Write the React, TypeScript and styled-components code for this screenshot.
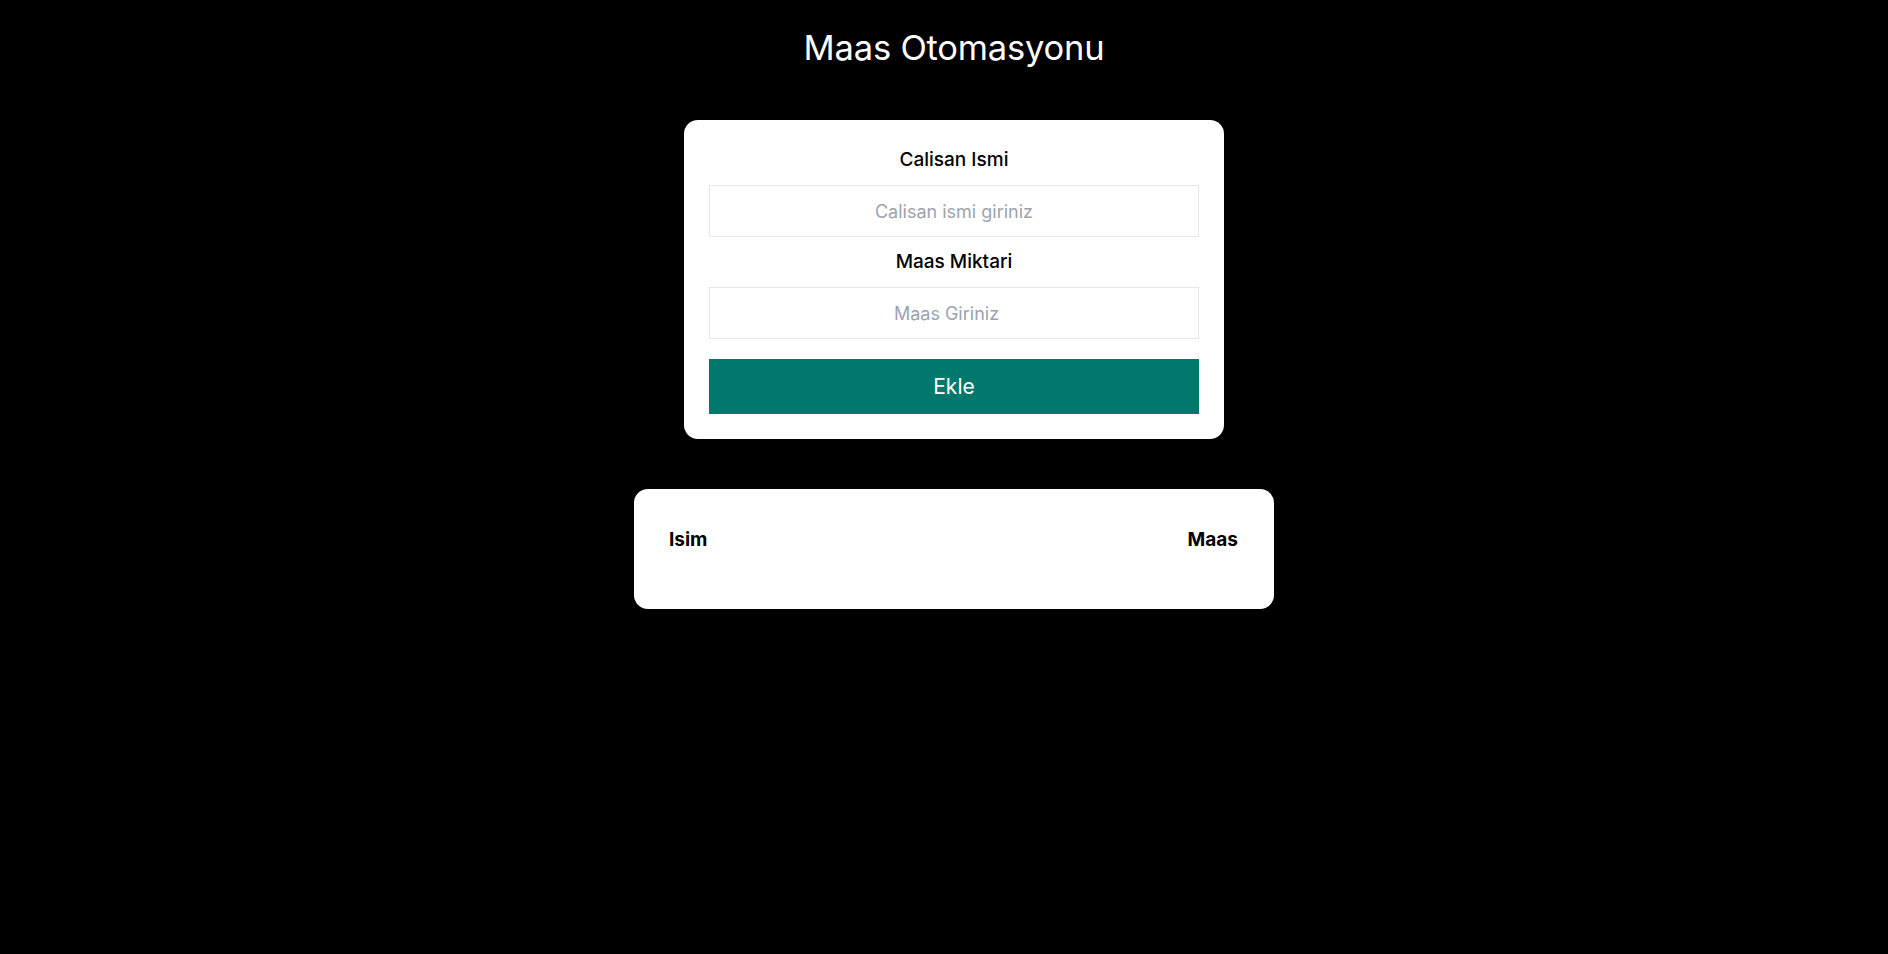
import React, { useState } from "react";
import styled, { createGlobalStyle } from "styled-components";

const GlobalStyle = createGlobalStyle`
  html, body {
    margin: 0;
    padding: 0;
    background: #000;
  }
  body {
    font-family: Inter, "Noto Sans", "Liberation Sans", sans-serif;
  }
  * { box-sizing: border-box; }
`;

const Page = styled.div`
  min-height: 100vh;
  background: #000;
  display: flex;
  flex-direction: column;
  align-items: center;
  padding-left: 20px;
`;

const Title = styled.h1`
  margin: 26px 0 50px;
  color: #fff;
  font-size: 34.5px;
  line-height: 44px;
  font-weight: 400;
  letter-spacing: -0.2px;
`;

const FormCard = styled.form`
  width: 540px;
  background: #fff;
  border-radius: 14px;
  padding: 28px 25px 25px;
  display: flex;
  flex-direction: column;
`;

const Label = styled.label`
  display: block;
  text-align: center;
  color: #000;
  font-size: 19px;
  line-height: 24px;
  font-weight: 500;
  margin-bottom: 13px;
`;

const Input = styled.input<{ $spinner?: boolean }>`
  width: 100%;
  height: 52px;
  border: 1px solid #e5e7eb;
  border-radius: 0;
  text-align: center;
  font-family: inherit;
  font-size: 18px;
  color: #111;
  outline: none;
  margin-bottom: 13px;
  padding: 0 ${(p) => (p.$spinner ? "17px" : "2px")} 0 2px;
  &::placeholder {
    color: #9ca3af;
  }
`;

const SubmitButton = styled.button`
  margin-top: 7px;
  width: 100%;
  height: 55px;
  border: none;
  background: #00786d;
  color: #fff;
  font-family: inherit;
  font-size: 21px;
  cursor: pointer;
`;

const TableCard = styled.div`
  margin-top: 50px;
  width: 640px;
  background: #fff;
  border-radius: 14px;
  padding: 39px 36px 57px 35px;
`;

const Table = styled.table`
  width: 100%;
  border-collapse: collapse;
`;

const HeadCell = styled.th<{ $align: "left" | "right" }>`
  text-align: ${(p) => p.$align};
  padding: 0;
  font-size: 19px;
  line-height: 24px;
  font-weight: 700;
  color: #000;
`;

export default function App() {
  const [name, setName] = useState("");
  const [salary, setSalary] = useState("");

  return (
    <Page>
      <GlobalStyle />
      <Title>Maas Otomasyonu</Title>
      <FormCard onSubmit={(e) => e.preventDefault()}>
        <Label htmlFor="name">Calisan Ismi</Label>
        <Input
          id="name"
          placeholder="Calisan ismi giriniz"
          value={name}
          onChange={(e) => setName(e.target.value)}
        />
        <Label htmlFor="salary">Maas Miktari</Label>
        <Input
          id="salary"
          $spinner
          placeholder="Maas Giriniz"
          value={salary}
          onChange={(e) => setSalary(e.target.value)}
        />
        <SubmitButton type="submit">Ekle</SubmitButton>
      </FormCard>
      <TableCard>
        <Table>
          <thead>
            <tr>
              <HeadCell $align="left">Isim</HeadCell>
              <HeadCell $align="right">Maas</HeadCell>
            </tr>
          </thead>
          <tbody />
        </Table>
      </TableCard>
    </Page>
  );
}
